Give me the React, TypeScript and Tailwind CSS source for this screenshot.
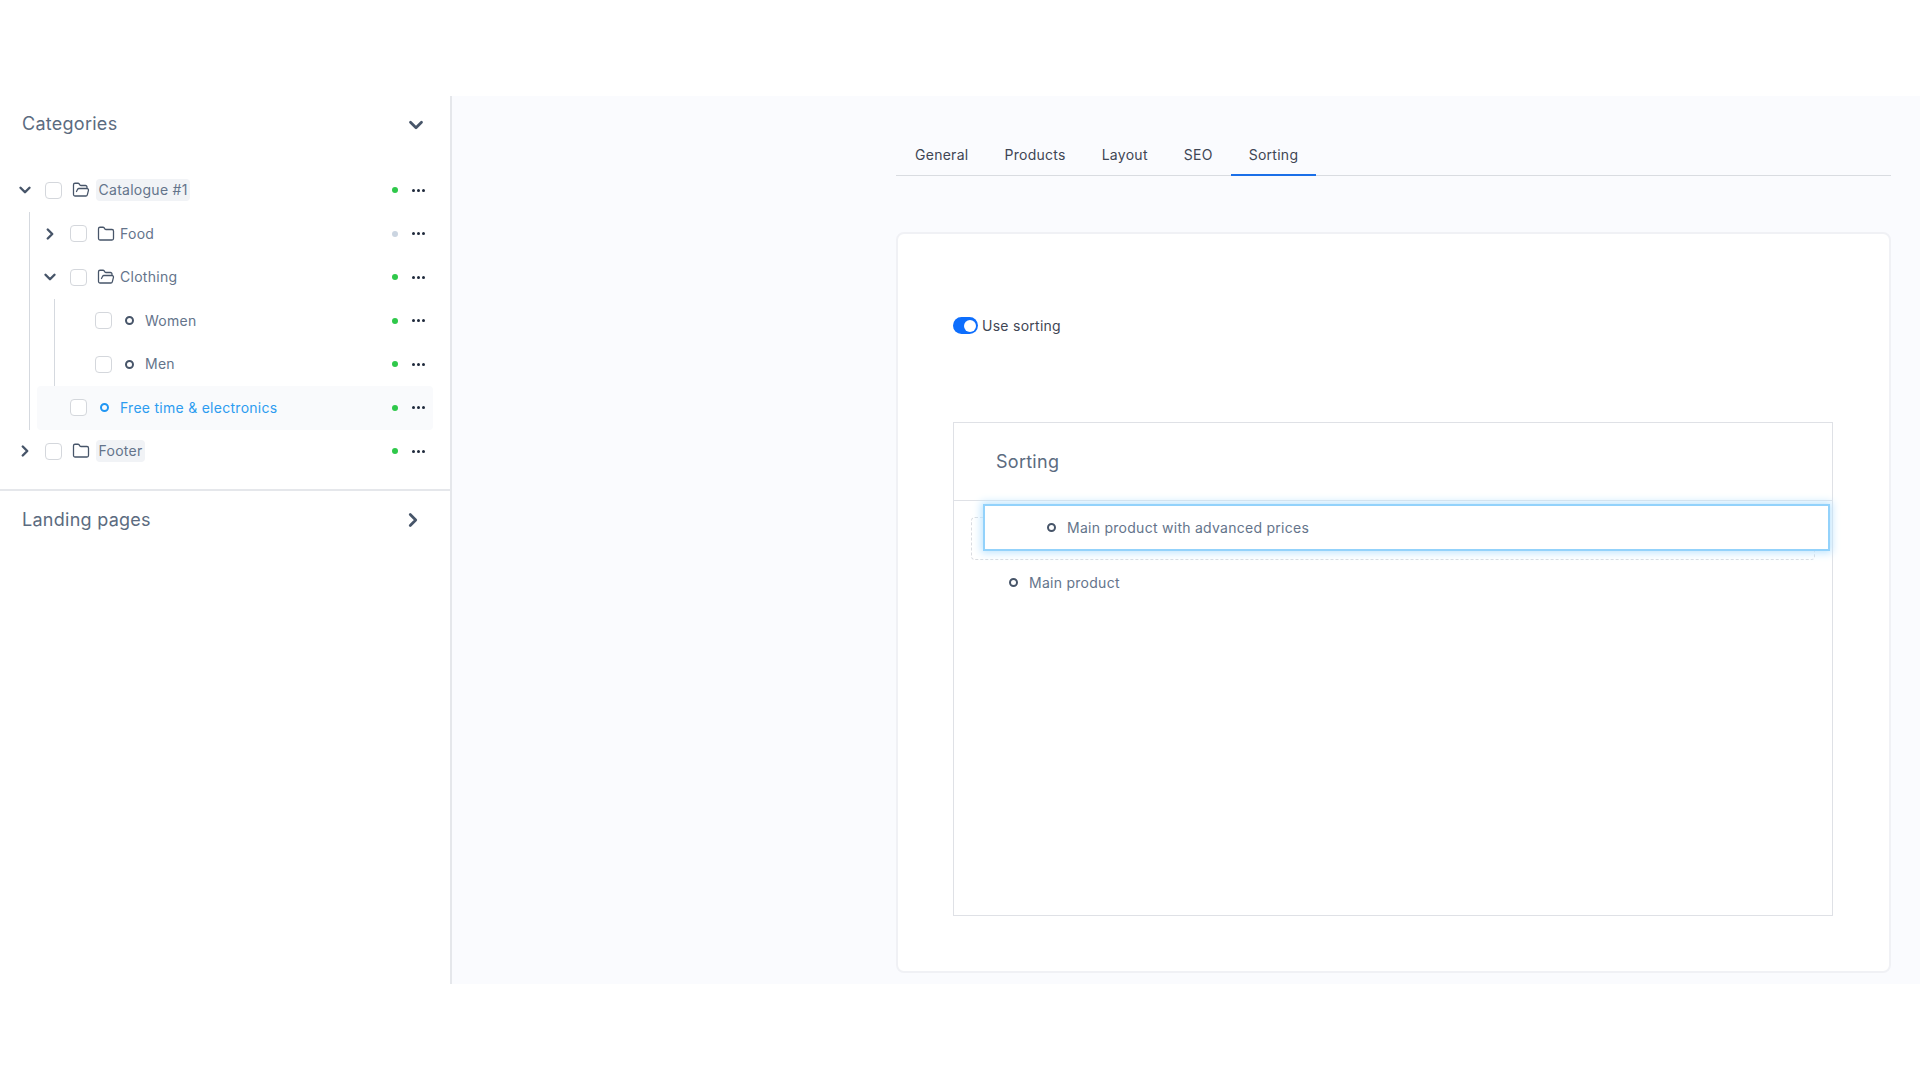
import type { ReactNode } from "react";
import { ChevronDown, ChevronRight, Folder, FolderOpen } from "lucide-react";

function Bullet({ active = false, shift = false }: { active?: boolean; shift?: boolean }) {
  return (
    <span
      className={`block h-[9px] w-[9px] rounded-full border-2 ${
        active ? "border-[#2196f3]" : "border-[#475569]"
      } ${shift ? "mr-[4px]" : ""}`}
    />
  );
}

function Row({
  label,
  open,
  icon,
  muted = false,
  active = false,
  tagged = false,
}: {
  label: string;
  open?: boolean;
  icon: ReactNode;
  muted?: boolean;
  active?: boolean;
  tagged?: boolean;
}) {
  return (
    <div
      className={`flex h-[43.5px] items-center pr-2 ${
        active ? "-ml-[2px] rounded bg-[#f9fafc] pl-[2px]" : ""
      }`}
    >
      <span className="mr-[9px] flex w-[22px] justify-center text-[#475569]">
        {open === true && <ChevronDown size={18} strokeWidth={3.2} />}
        {open === false && <ChevronRight size={18} strokeWidth={3.2} />}
      </span>
      <span className="h-[17px] w-[17px] rounded-[4px] border border-[#d4d7dc] bg-white" />
      <span className="ml-[10px] flex w-[18px] justify-center text-[#475569]">{icon}</span>
      <span
        className={`text-sm ${tagged ? "ml-[6px] rounded bg-[#f1f3f6] px-[2.5px] py-[1px]" : "ml-[5px]"} ${
          active ? "text-[#2d9cf0]" : "text-[#64748b]"
        }`}
      >
        {label}
      </span>
      <span
        className={`ml-auto h-[6px] w-[6px] rounded-full ${muted ? "bg-[#cbd5e1]" : "bg-[#2fc84a]"}`}
      />
      <span className="ml-[14px] flex gap-[2px]">
        <span className="h-[3px] w-[3px] rounded-full bg-[#1e293b]" />
        <span className="h-[3px] w-[3px] rounded-full bg-[#1e293b]" />
        <span className="h-[3px] w-[3px] rounded-full bg-[#1e293b]" />
      </span>
    </div>
  );
}

const closedFolder = <Folder size={20} strokeWidth={1.7} />;
const openFolder = <FolderOpen size={20} strokeWidth={1.7} />;

export default function App() {
  const tabs = ["General", "Products", "Layout", "SEO", "Sorting"];

  return (
    <div className="flex h-screen flex-col bg-white tracking-[0.27px] [font-family:Inter,sans-serif]">
      <div className="h-[96px]" />
      <div className="flex h-[888px]">
        <aside className="w-[452px] shrink-0 border-r-2 border-[#e5e7eb] bg-white">
          <div className="flex h-[56px] items-center justify-between pl-[22px] pr-[23px] text-[#475569]">
            <h2 className="text-lg text-[#5b6b80]">Categories</h2>
            <ChevronDown size={22} strokeWidth={3} className="mt-[2px]" />
          </div>

          <div className="mt-[16.5px] pl-[14px] pr-[17px]">
            <Row label="Catalogue #1" open={true} icon={openFolder} tagged />
            <div className="ml-[15px] border-l border-[#d5d9df] pl-[9px]">
              <Row label="Food" open={false} icon={closedFolder} muted />
              <Row label="Clothing" open={true} icon={openFolder} />
              <div className="ml-[15px] border-l border-[#d5d9df] pl-[9px]">
                <Row label="Women" icon={<Bullet shift />} />
                <Row label="Men" icon={<Bullet shift />} />
              </div>
              <Row label="Free time & electronics" icon={<Bullet active shift />} active />
            </div>
            <Row label="Footer" open={false} icon={closedFolder} tagged />
          </div>

          <div className="mt-[15.5px] flex h-[60px] items-center justify-between border-t-2 border-[#e5e7eb] pl-[22px] pr-[26px] text-[#475569]">
            <h2 className="text-lg text-[#5b6b80]">Landing pages</h2>
            <ChevronRight size={22} strokeWidth={3} />
          </div>
        </aside>

        <main className="flex-1 bg-[#fafbfe] pl-[444px] pr-[29px] pt-[36px]">
          <nav className="flex h-[44px] border-b border-[#d9dce1] pl-[1px]">
            {tabs.map((tab) => (
              <button
                key={tab}
                className={`-mb-px flex items-center border-b-2 px-[18px] pt-[4px] text-sm text-[#3f4654] ${
                  tab === "Sorting" ? "border-[#1a6fe8]" : "border-transparent"
                }`}
              >
                {tab}
              </button>
            ))}
          </nav>

          <section className="mt-[56px] h-[741px] rounded-lg border-2 border-[#f0f1f5] bg-white pl-[55px] pr-[56px] pt-[83px]">
            <label className="flex h-[17px] items-center gap-[4px] text-sm text-[#3f4654]">
              <span className="flex h-[17px] w-[25px] items-center justify-end rounded-full bg-[#0d6efd] pr-[2px]">
                <span className="h-[12px] w-[12px] rounded-full bg-white" />
              </span>
              Use sorting
            </label>

            <div className="mt-[88px] h-[494px] border border-[#dfe1e6]">
              <div className="flex h-[78px] items-center border-b border-[#dfe1e6] pl-[42px] text-lg text-[#5b6b80]">
                Sorting
              </div>
              <div className="relative">
                <div className="absolute left-[29px] top-[3px] z-10 flex h-[47px] w-[847px] items-center border-2 border-[#93d2fb] bg-white pl-[62px] text-sm text-[#64748b] shadow-[0_0_8px_2px_#bfe5fe]">
                  <Bullet />
                  <span className="ml-[11px]">Main product with advanced prices</span>
                </div>
                <div className="mx-[17px] h-[43px] translate-y-[16px] rounded border border-dashed border-[#d9dce1]" />
                <div className="mt-[16px] flex h-[45px] items-center pl-[55px] text-sm text-[#64748b]">
                  <Bullet />
                  <span className="ml-[11px]">Main product</span>
                </div>
              </div>
            </div>
          </section>
        </main>
      </div>
    </div>
  );
}
